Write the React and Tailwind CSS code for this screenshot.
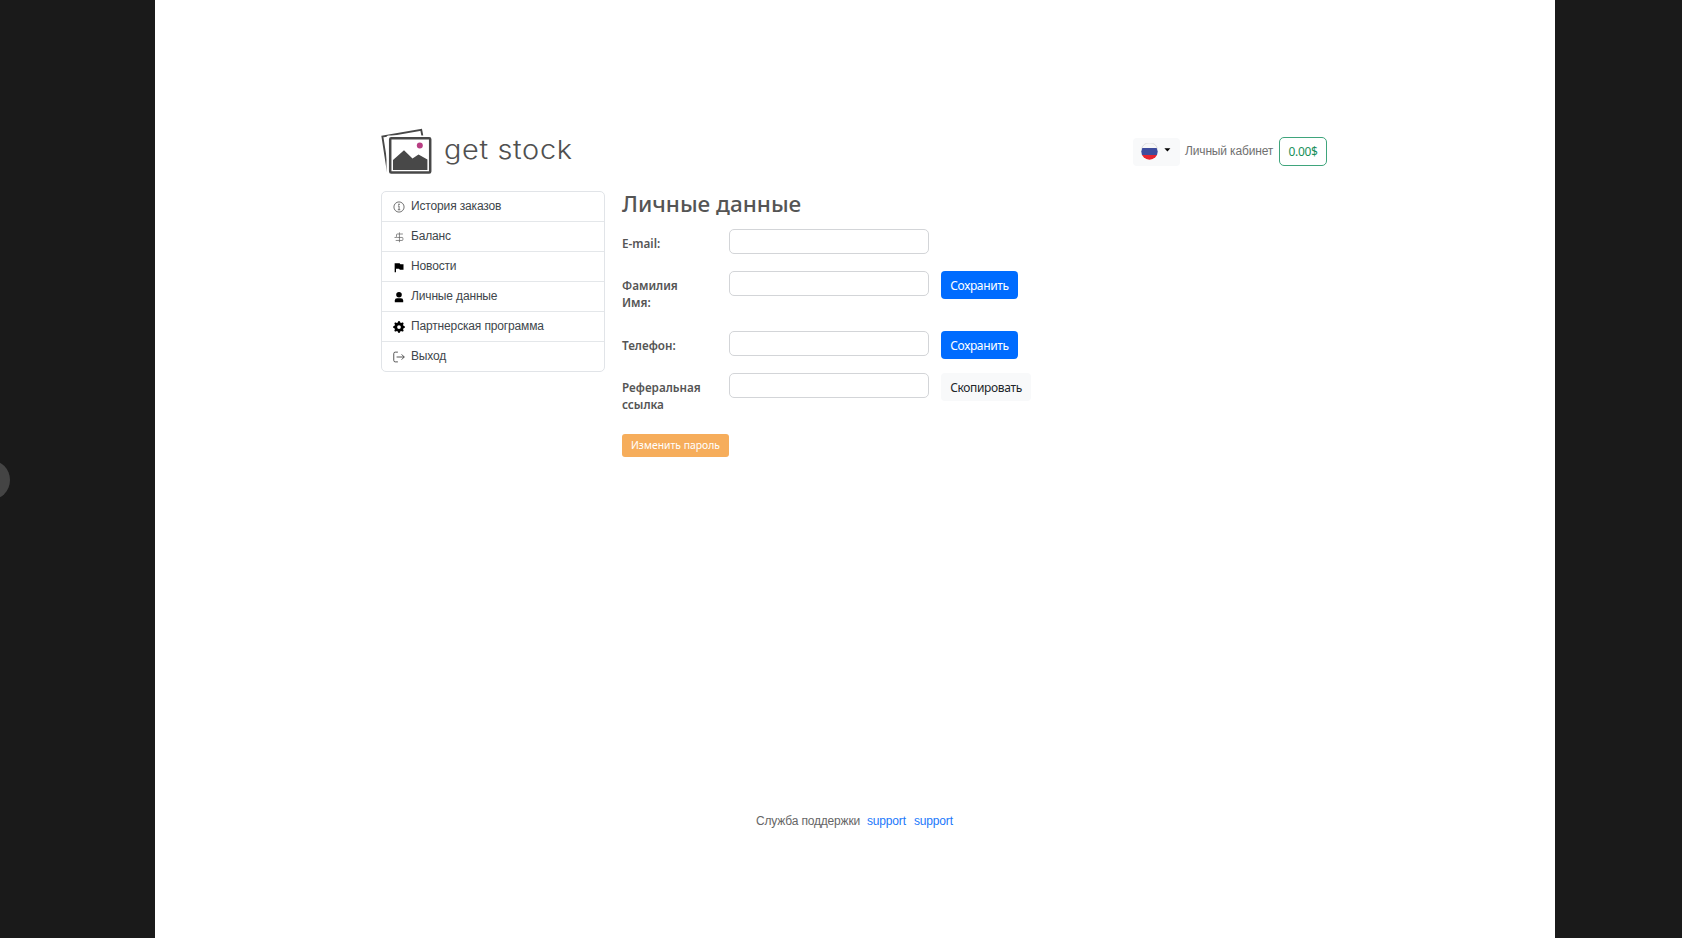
import React from "react";

const iconProps = { width: 12, height: 12, viewBox: "0 0 16 16", fill: "currentColor" };

const InfoIcon = () => (
  <svg {...iconProps} fill="none" stroke="#555" strokeWidth="1.1">
    <circle cx="8" cy="8" r="6.8" />
    <path d="M6.6 6.6H8.1V11.6M6.4 11.7H9.7" />
    <circle cx="8" cy="4.3" r="0.5" fill="#555" />
  </svg>
);

const BalanceIcon = () => (
  <svg {...iconProps} fill="none" stroke="#666" strokeWidth="1">
    <path d="M8.6 1.8V15M13.2 4H5.7Q4.7 4 4.7 5V7.4Q4.7 8.6 5.9 8.6H12.2Q13.2 8.6 13.2 9.6V11.6Q13.2 12.6 12.2 12.6H3.6M2 8.6H5" />
  </svg>
);

const FlagIcon = () => (
  <svg {...iconProps}>
    <path d="M2.2 3H8.8L9.8 4.4H14V11.8H9.2L8 10.4H4V15H2.2Z" />
  </svg>
);

const PersonIcon = () => (
  <svg {...iconProps}>
    <circle cx="8" cy="5" r="3.7" />
    <path d="M2.4 15V12.6Q2.4 9.5 5.5 9.5H10.5Q13.6 9.5 13.6 12.6V15Z" />
  </svg>
);

const GearIcon = () => (
  <svg {...iconProps}>
    <path
      fillRule="evenodd"
      d="M9.4 1.1c-.4-1.4-2.4-1.4-2.8 0l-.1.3a1.5 1.5 0 0 1-2.1.9l-.3-.2c-1.3-.7-2.7.7-2 2l.2.3a1.5 1.5 0 0 1-.9 2.1l-.3.1c-1.4.4-1.4 2.4 0 2.8l.3.1a1.5 1.5 0 0 1 .9 2.1l-.2.3c-.7 1.3.7 2.7 2 2l.3-.2a1.5 1.5 0 0 1 2.1.9l.1.3c.4 1.4 2.4 1.4 2.8 0l.1-.3a1.5 1.5 0 0 1 2.1-.9l.3.2c1.3.7 2.7-.7 2-2l-.2-.3a1.5 1.5 0 0 1 .9-2.1l.3-.1c1.4-.4 1.4-2.4 0-2.8l-.3-.1a1.5 1.5 0 0 1-.9-2.1l.2-.3c.7-1.3-.7-2.7-2-2l-.3.2a1.5 1.5 0 0 1-2.1-.9ZM8 10.5a2.5 2.5 0 1 1 0-5 2.5 2.5 0 0 1 0 5"
    />
  </svg>
);

const ExitIcon = () => (
  <svg {...iconProps} fill="none" stroke="#444" strokeWidth="1.2">
    <path d="M6.5 1.5H3Q1 1.5 1 3.5V12.5Q1 14.5 3 14.5H6.5M4.8 8H15M11.5 4.5L15 8L11.5 11.5" />
  </svg>
);

const menu = [
  [InfoIcon, "История заказов"],
  [BalanceIcon, "Баланс"],
  [FlagIcon, "Новости"],
  [PersonIcon, "Личные данные"],
  [GearIcon, "Партнерская программа"],
  [ExitIcon, "Выход"],
];

function Logo() {
  return (
    <div className="flex h-[48px] items-start pt-px">
      <svg width="54" height="48" viewBox="0 0 54 48" fill="none">
        <path d="M6.8 43.5L1.4 8.6L40.2 1.8L41.4 8" stroke="#484848" strokeWidth="1.9" />
        <rect x="5.5" y="7.5" width="46" height="39" rx="2" fill="#fff" />
        <rect x="9.2" y="10.2" width="40" height="34.4" rx="1" stroke="#484848" strokeWidth="2.5" />
        <path d="M12 42V32L23 22.2L31.5 30.4L37.5 26.4L46.4 31.5V42Z" fill="#484848" />
        <circle cx="38.8" cy="17.4" r="3" fill="#b83e83" />
      </svg>
      <span className="ml-[9px] mt-[4px] origin-left scale-x-[1.11] whitespace-nowrap font-['Inter'] text-[26px] font-light leading-[36px] tracking-[0.6px] text-[#505050]">
        get stock
      </span>
    </div>
  );
}

function Row({ label, className, children }) {
  return (
    <div className={"flex items-start " + className}>
      <div className="w-[107px] shrink-0 whitespace-pre-line pt-[6px] text-[11.7px] font-semibold leading-[17px] text-[#555]">
        {label}
      </div>
      <input className="h-[25px] w-[200px] shrink-0 rounded-[5px] border border-[#d3d5d8] bg-white px-2 text-[12px] outline-none" />
      {children}
    </div>
  );
}

const Save = () => (
  <button className="ml-[12px] h-[28px] w-[77px] rounded-[4px] bg-[#006cff] pt-px text-[12px] tracking-[-0.35px] text-white">
    Сохранить
  </button>
);

export default function App() {
  return (
    <div className="relative flex h-[938px] overflow-hidden bg-[#1a1a1a] font-['Noto_Sans',sans-serif]">
      <div className="absolute left-[-30px] top-[460px] size-10 rounded-full bg-[#444]" />
      <main className="ml-[155px] flex w-[1400px] shrink-0 flex-col bg-white pl-[226px] pr-[228px] pt-[127px]">
        <header className="flex h-[64px] items-start justify-between">
          <Logo />
          <div className="mt-[10px] flex items-center">
            <button className="flex h-[28px] w-[47px] items-center rounded-[4px] bg-[#f8f9fa] pl-[8px]">
              <svg width="17" height="17" viewBox="0 0 17 17">
                <clipPath id="flagClip">
                  <circle cx="8.5" cy="8.5" r="8.2" />
                </clipPath>
                <g clipPath="url(#flagClip)">
                  <path fill="#f7f7f7" d="M0 0H17V5H0Z" />
                  <path fill="#3e4c9d" d="M0 5H17V12H0Z" />
                  <path fill="#e7242f" d="M0 12H17V17H0Z" />
                </g>
                <path d="M.6 5.8A8.2 8.2 0 0 1 16.4 5.8" fill="none" stroke="#ccc" strokeWidth=".6" />
              </svg>
              <svg className="mb-[3px] ml-[6px]" width="7" height="4" viewBox="0 0 7 4">
                <path d="M.4 .2H6.4L3.4 3.6Z" />
              </svg>
            </button>
            <span className="-mt-[2px] ml-[5px] w-[94px] whitespace-nowrap font-['Liberation_Sans'] text-[12px] tracking-[-0.15px] text-[#707070]">
              Личный кабинет
            </span>
            <button className="h-[29px] w-[48px] rounded-[5px] border border-[#3fa57c] text-[12px] tracking-[-0.3px] text-[#198f5a]">
              0.00$
            </button>
          </div>
        </header>

        <div className="flex items-start">
          <nav className="w-[224px] shrink-0 divide-y divide-[#e4e7ea] rounded-[5px] border border-[#e1e4e8] font-['Liberation_Sans'] text-[12px] tracking-[-0.15px] text-[#40464b]">
            {menu.map(([Icon, name]) => (
              <a key={name} className="flex h-[30px] items-center pl-[11px] last:h-[29px]">
                <span className="text-black">
                  <Icon />
                </span>
                <span className="mb-[2px] ml-[6px] whitespace-nowrap">{name}</span>
              </a>
            ))}
          </nav>

          <section className="ml-[17px]">
            <h1 className="h-[38px] whitespace-nowrap text-[22.5px] font-medium leading-[26px] text-[#555]">
              Личные данные
            </h1>
            <Row label="E-mail:" className="h-[42px]" />
            <Row label={"Фамилия\nИмя:"} className="h-[60px]">
              <Save />
            </Row>
            <Row label="Телефон:" className="h-[42px]">
              <Save />
            </Row>
            <Row label={"Реферальная\nссылка"} className="h-[61px]">
              <button className="ml-[12px] h-[28px] w-[90px] rounded-[4px] bg-[#f8f9fa] pt-px text-[12px] tracking-[-0.35px] text-[#212529]">
                Скопировать
              </button>
            </Row>
            <button className="block h-[23px] w-[107px] rounded-[3px] bg-[#f6ad5b] text-[10.4px] text-white">
              Изменить пароль
            </button>
          </section>
        </div>

        <footer className="mb-[108px] ml-[375px] mt-auto flex whitespace-nowrap font-['Liberation_Sans'] text-[12px] leading-[18px] tracking-[-0.17px] text-[#666]">
          <span className="w-[111px]">Служба поддержки</span>
          <a className="w-[47px] text-[#1a78fb]">support</a>
          <a className="text-[#1a78fb]">support</a>
        </footer>
      </main>
    </div>
  );
}
